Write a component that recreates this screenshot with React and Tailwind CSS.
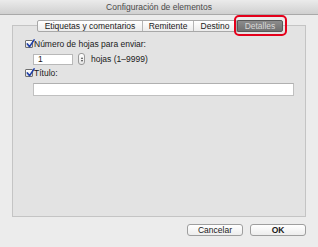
export default function App() {
  const font = { fontFamily: '"Liberation Sans", Arial, sans-serif' };
  return (
    <div
      className="w-[318px] h-[247px] bg-[#ececec] flex flex-col overflow-hidden text-[#1a1a1a]"
      style={font}
    >
      {/* Title bar */}
      <div className="h-[15px] shrink-0 bg-gradient-to-b from-[#ebebeb] to-[#d0d0d0] border-b border-[#a9a9a9] flex items-center justify-center">
        <span className="text-[8.5px] text-[#4a4a4a] leading-none">Configuración de elementos</span>
      </div>

      {/* Tab box */}
      <div className="mx-[12px] mt-[10px] h-[192px] border border-[#c4c4c4] bg-[#e3e3e3] flex flex-col">
        {/* Segmented tabs */}
        <div className="flex items-center -mt-[6px] ml-[24px] h-[12px]">
          <div className="h-[12px] flex items-center bg-gradient-to-b from-white to-[#ececec] border border-[#a8a8a8] rounded-l-[2px]">
            <span className="w-[105px] h-[10px] flex items-center justify-center text-[8.5px] leading-none border-r border-[#b5b5b5]">Etiquetas y comentarios</span>
            <span className="w-[51px] h-[10px] flex items-center justify-center text-[8.5px] leading-none border-r border-[#b5b5b5]">Remitente</span>
            <span className="w-[42px] h-[10px] flex items-center justify-center text-[8.5px] leading-none">Destino</span>
          </div>
          <div className="relative h-[12px] w-[46px] bg-gradient-to-b from-[#8c8c8c] to-[#707070] border border-[#5a5a5a] rounded-r-[2px] flex items-center justify-center">
            <span className="text-[8.5px] leading-none text-[#d8d8d8]">Detalles</span>
            <div className="absolute -left-[4px] -right-[5px] -top-[6px] -bottom-[5px] border-[2px] border-[#e4001b] rounded-[5px]" />
          </div>
        </div>

        {/* Content */}
        <div className="flex flex-col pl-[12px] pt-[7px]">
          <div className="flex items-center gap-[1px] h-[10px]">
            <Check />
            <span className="text-[8.5px] leading-none">Número de hojas para enviar:</span>
          </div>
          <div className="flex items-center mt-[4px] ml-[8px] h-[12px]">
            <div className="w-[40px] h-[11px] bg-white border border-[#b8b8b8] flex items-center pl-[4px] text-[8.5px] leading-none">1</div>
            <div className="ml-[5px] w-[7px] h-[12px] bg-gradient-to-b from-white to-[#e6e6e6] border border-[#9a9a9a] rounded-[3px] flex flex-col items-center justify-center gap-[1px]">
              <span className="block w-0 h-0 border-l-[1.5px] border-r-[1.5px] border-b-[2px] border-l-transparent border-r-transparent border-b-[#444]" />
              <span className="block w-0 h-0 border-l-[1.5px] border-r-[1.5px] border-t-[2px] border-l-transparent border-r-transparent border-t-[#444]" />
            </div>
            <span className="ml-[6px] text-[8.5px] leading-none">hojas (1–9999)</span>
          </div>
          <div className="flex items-center gap-[1px] h-[10px] mt-[3px]">
            <Check />
            <span className="text-[8.5px] leading-none">Título:</span>
          </div>
          <div className="ml-[8px] mt-[5px] w-[261px] h-[13px] bg-white border border-[#c0c0c0] border-t-[#b0b0b0]" />
        </div>
      </div>

      {/* Buttons */}
      <div className="flex justify-end gap-[7px] mr-[12px] mt-[7px]">
        <button className="w-[56px] h-[12px] bg-gradient-to-b from-white to-[#ededed] border border-[#9e9e9e] rounded-[3px] text-[8.5px] leading-none flex items-center justify-center">
          Cancelar
        </button>
        <button className="w-[56px] h-[12px] bg-gradient-to-b from-white to-[#ededed] border border-[#9e9e9e] rounded-[3px] text-[8.5px] font-bold leading-none flex items-center justify-center">
          OK
        </button>
      </div>
    </div>
  );
}

function Check() {
  return (
    <div className="relative w-[8px] h-[8px] bg-gradient-to-b from-white to-[#dcdcdc] border border-[#6f6f6f] rounded-[1px]">
      <svg viewBox="0 0 10 10" className="absolute -top-[2px] left-0 w-[9px] h-[9px]">
        <path d="M1.5 5.5 L4 8.5 L9 1" fill="none" stroke="#1f3fa8" strokeWidth="1.8" strokeLinecap="round" strokeLinejoin="round" />
      </svg>
    </div>
  );
}
